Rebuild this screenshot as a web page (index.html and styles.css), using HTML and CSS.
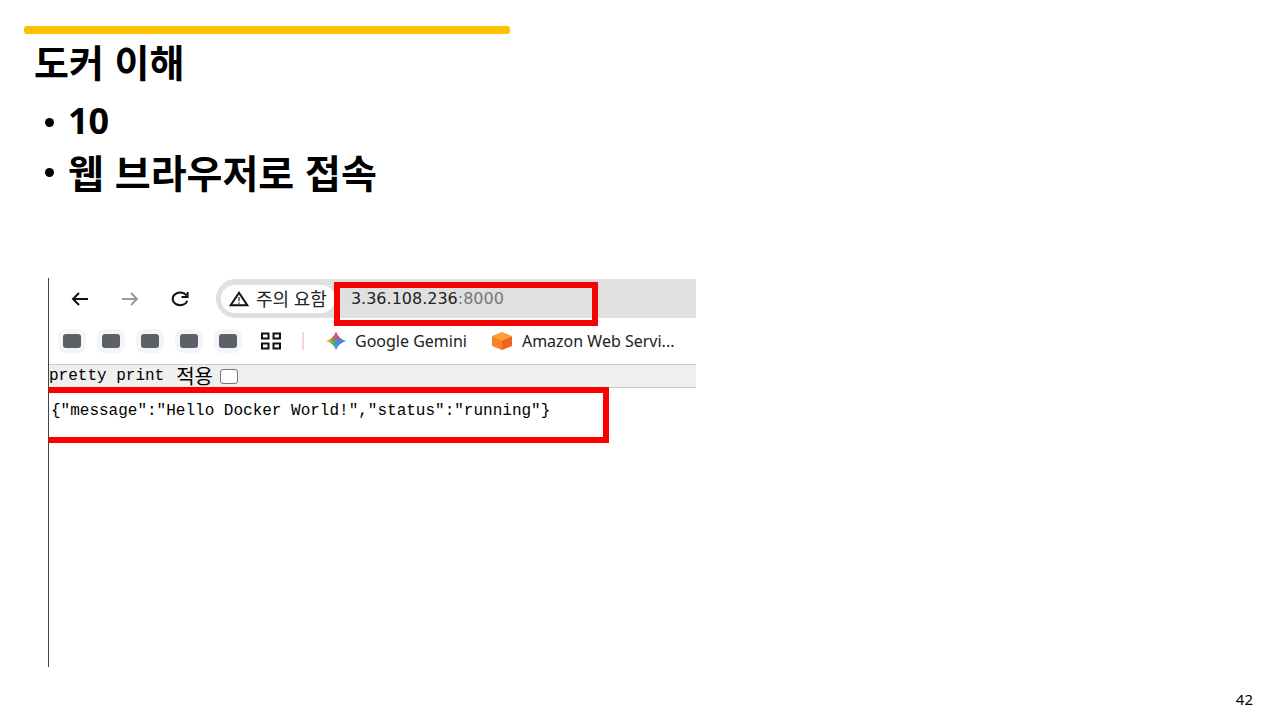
FILE: index.html
```html
<!DOCTYPE html>
<html lang="ko">
  <head>
    <meta charset="utf-8" />
    <meta name="viewport" content="width=device-width, initial-scale=1" />
    <title>도커 이해</title>
    <link rel="stylesheet" href="styles.css" />
  </head>
  <body>
    <main class="slide">
      <div class="accent"></div>
      <h1>도커 이해</h1>
      <ul class="points">
        <li><span class="number">10</span></li>
        <li>웹 브라우저로 접속</li>
      </ul>

      <section class="browser">
        <!-- navigation and address -->
        <div class="toolbar">
          <nav class="nav">
            <button type="button" aria-label="뒤로">
              <svg width="20" height="20" viewBox="0 0 20 20">
                <path d="M18 10H3M9 4L3 10L9 16" />
              </svg>
            </button>
            <button type="button" class="disabled" aria-label="앞으로">
              <svg width="20" height="20" viewBox="0 0 20 20">
                <path d="M2 10H17M11 4L17 10L11 16" />
              </svg>
            </button>
            <button type="button" aria-label="새로고침">
              <svg width="20" height="20" viewBox="0 0 20 20">
                <path d="M16.5 6.5A7.5 6.3 0 1 0 17.3 11.8M17.6 3V8H11.5" />
              </svg>
            </button>
          </nav>
          <div class="address">
            <button type="button" class="warning">
              <svg width="20" height="16" viewBox="0 0 20 16">
                <path d="M10 1.8L18.3 14.2H1.7Z" />
                <path class="mark" d="M10 6V10M10 11.3V12.8" />
              </svg>
              주의 요함
            </button>
            <div class="url">3.36.108.236<span>:8000</span></div>
            <div class="highlight"></div>
          </div>
        </div>

        <!-- bookmarks -->
        <div class="bookmarks">
          <div class="tiles">
            <i class="tile"></i>
            <i class="tile"></i>
            <i class="tile"></i>
            <i class="tile"></i>
            <i class="tile"></i>
          </div>
          <button type="button" class="apps" aria-label="앱">
            <svg width="20" height="18" viewBox="0 0 20 18">
              <path d="M1 1.5H7.5V6.5H1ZM12.5 1.5H19V6.5H12.5ZM1 11.5H7.5V16.5H1ZM12.5 11.5H19V16.5H12.5Z" />
            </svg>
          </button>
          <span class="divider"></span>
          <a href="#" class="gemini">
            <svg width="20" height="18" viewBox="0 0 20 18">
              <defs>
                <linearGradient id="base" x1="0" y1="0" x2="1" y2="0">
                  <stop offset="0.1" stop-color="#f4bd35" />
                  <stop offset="0.35" stop-color="#4fae6a" />
                  <stop offset="0.6" stop-color="#3f87f5" />
                </linearGradient>
                <linearGradient id="red" x1="0" y1="0" x2="0" y2="1">
                  <stop offset="0.2" stop-color="#ee4a48" />
                  <stop offset="0.55" stop-color="#ee4a48" stop-opacity="0" />
                </linearGradient>
              </defs>
              <path fill="url(#base)" d="M10 0Q12.5 6.5 20 9Q12.5 11.5 10 18Q7.5 11.5 0 9Q7.5 6.5 10 0Z" />
              <path fill="url(#red)" d="M10 0Q12.5 6.5 20 9Q12.5 11.5 10 18Q7.5 11.5 0 9Q7.5 6.5 10 0Z" />
            </svg>
            Google Gemini
          </a>
          <a href="#" class="aws">
            <svg width="22" height="20" viewBox="0 0 22 20">
              <path fill="#ff9a35" d="M11 1L21 5L11 9.5L1 5Z" />
              <path fill="#f98224" d="M1 5L11 9.5V19L1 15Z" />
              <path fill="#ed6420" d="M21 5L11 9.5V19L21 15Z" />
            </svg>
            Amazon Web Servi...
          </a>
        </div>

        <!-- page content -->
        <div class="format">
          <label for="pretty">pretty print <span>적용</span></label>
          <input type="checkbox" id="pretty" />
        </div>
        <pre class="response">{"message":"Hello Docker World!","status":"running"}</pre>
      </section>

      <footer>42</footer>
    </main>
  </body>
</html>
```

FILE: styles.css
```css
* {
  box-sizing: border-box;
}

body {
  margin: 0;
  background: #fff;
  color: #000;
  font-family: 'Noto Sans', 'Noto Sans CJK KR', sans-serif;
}

.slide {
  display: flex;
  flex-direction: column;
  align-items: flex-start;
  min-height: 100vh;
  padding: 26px 24px 9px;
}

.accent {
  width: 486px;
  max-width: 100%;
  height: 8px;
  border-radius: 3px;
  background: #ffc000;
}

h1 {
  margin: 2px 0 0 10px;
  font: bold 38px/50px 'Noto Sans CJK KR', sans-serif;
}

.points {
  margin: 10px 0 0 20px;
  padding: 0;
  list-style: none;
  font: bold 39px/50px 'Noto Sans CJK KR', sans-serif;
}

.points li {
  display: flex;
  align-items: center;
  gap: 14px;
}

.points li::before {
  content: '';
  width: 9px;
  height: 9px;
  margin: 3px 0 0 1px;
  border-radius: 50%;
  background: #000;
}

.points .number {
  font-family: 'Noto Sans', sans-serif;
  font-size: 36px;
}

/* browser window */
.browser {
  flex: 1;
  width: 648px;
  max-width: 100%;
  margin: 82px 0 20px 24px;
  border-left: 1px solid #444;
}

button {
  padding: 0;
  border: 0;
  background: none;
  color: inherit;
  font: inherit;
}

svg {
  display: block;
  flex: none;
}

.toolbar {
  display: flex;
  align-items: center;
  padding: 1px 0 0 21px;
}

.nav {
  display: flex;
  gap: 30px;
}

.nav svg,
.warning svg,
.apps svg {
  fill: none;
  stroke: #111;
  stroke-width: 2;
}

.nav .disabled svg {
  stroke: #999;
}

.address {
  position: relative;
  display: flex;
  flex: 1;
  align-items: center;
  height: 39px;
  margin-left: 26px;
  padding: 0 5px;
  border-radius: 20px 0 0 20px;
  background: #e0e0e0;
}

.warning {
  display: flex;
  align-items: center;
  gap: 7px;
  height: 28px;
  padding: 0 8px;
  border-radius: 14px;
  background: #fff;
  color: #222;
  font-size: 18px;
  line-height: 24px;
  white-space: nowrap;
}

.warning .mark {
  stroke: #777;
}

.url {
  margin-left: 16px;
  color: #222;
  font: 16px/20px 'DejaVu Sans', sans-serif;
}

.url span {
  color: #777;
}

/* red box drawn over the address bar */
.highlight {
  position: absolute;
  top: 3px;
  left: 118px;
  width: 264px;
  height: 44px;
  border: 6px solid #fb0000;
}

.bookmarks {
  display: flex;
  align-items: center;
  height: 46px;
  padding-left: 9px;
}

.tiles {
  display: flex;
  gap: 11px;
}

.tile {
  width: 28px;
  height: 24px;
  border: 5px solid #f3f5f8;
  border-radius: 8px;
  background: #5d6066;
}

.apps {
  margin-left: 19px;
}

.divider {
  width: 2px;
  height: 18px;
  margin: 0 22px 0 21px;
  background: #f9d3dc;
}

.bookmarks a {
  display: flex;
  align-items: center;
  gap: 9px;
  color: #222;
  font-size: 16px;
  text-decoration: none;
  white-space: nowrap;
}

.bookmarks .aws {
  margin-left: 24px;
}

.format {
  display: flex;
  align-items: center;
  gap: 7px;
  height: 24px;
  border-top: 1px solid #ccc;
  border-bottom: 1px solid #ccc;
  background: #efefef;
  font: 16px/22px 'Liberation Mono', 'Noto Sans CJK KR', monospace;
}

.format label {
  display: flex;
  align-items: center;
  gap: 12px;
}

.format span {
  font-family: 'Noto Sans CJK KR', sans-serif;
  font-size: 20px;
}

.format input {
  appearance: none;
  width: 18px;
  height: 15px;
  margin: 0;
  border: 1px solid #767676;
  border-radius: 3px;
  background: #fff;
}

.response {
  width: 560px;
  max-width: 100%;
  height: 56px;
  margin: -1px 0 0;
  padding: 8px 0 0 2px;
  border: 6px solid #fb0000;
  border-left: 0;
  font: 16px/20px 'Liberation Mono', monospace;
}

footer {
  align-self: flex-end;
  margin-right: 3px;
  font-size: 15px;
  line-height: 24px;
}
```
